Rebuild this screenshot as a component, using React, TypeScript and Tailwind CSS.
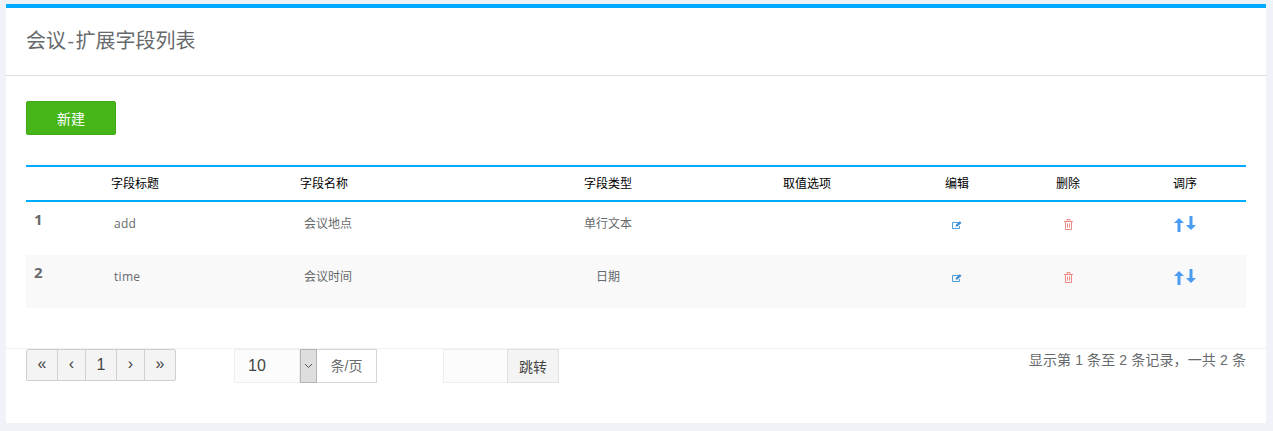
const rows = [
  { n: "1", title: "add", name: "会议地点", type: "单行文本" },
  { n: "2", title: "time", name: "会议时间", type: "日期" },
];

function Arrow({ down = false }: { down?: boolean }) {
  return (
    <svg width="10" height="15" viewBox="0 0 10 15" className={down ? "block -mt-[1px]" : "block"}>
      <path
        d={down ? "M3.5 0H6.5V9H10L5 14L0 9H3.5Z" : "M3.5 15H6.5V6H10L5 1L0 6H3.5Z"}
        fill="#4a9bf2"
      />
    </svg>
  );
}

function EditIcon() {
  return (
    <svg width="10" height="8" viewBox="0 0 10 8" className="block mx-auto">
      <path d="M7 1.5H0.5V7.5H7.5V5" fill="none" stroke="#4a9fdc" strokeWidth="1" />
      <path d="M3.5 5.5L4 3.8L7.8 0.3L9.6 1.8L5.5 5.5Z" fill="#3d8fd6" />
    </svg>
  );
}

function TrashIcon() {
  return (
    <svg width="9" height="11" viewBox="0 0 9 11" className="block mx-auto">
      <path
        d="M0 2.5H9M3 2.5V0.5H6V2.5M1.5 2.5V10.5H7.5V2.5M3.5 4.5V8.5M5.5 4.5V8.5"
        fill="none"
        stroke="#ee8a85"
        strokeWidth="1"
      />
    </svg>
  );
}

const pages = [
  { t: "«", w: "w-[30px]" },
  { t: "‹", w: "w-[28px]" },
  { t: "1", w: "w-[31px]" },
  { t: "›", w: "w-[28px]" },
  { t: "»", w: "w-[31px]" },
];

const th = "h-[37px] border-y-2 border-[#00aaff] font-normal";

export default function App() {
  return (
    <div className="h-[431px] bg-[#eff3f7] pt-[4px] pr-[7px] pl-[6px] font-['Open_Sans','Noto_Sans_CJK_SC',sans-serif] text-[#676a6c] overflow-hidden">
      <div className="h-[419px] bg-white border-t-4 border-[#00aaff]">
        <div className="h-[68px] border-b border-[#e0e0e0] px-[20px] flex items-center">
          <h1 className="text-[20px] leading-none -mt-[1px] text-[#676a6c] font-normal">
            会议<span className="mx-[1.5px]">-</span>扩展字段列表
          </h1>
        </div>
        <div className="px-[20px] pt-[25px]">
          <button className="block w-[90px] h-[34px] pt-[1px] rounded-[2px] bg-[#46b517] border border-[#3fa814] text-white text-[14px]">新建</button>
          <table className="mt-[30px] w-[1220px] table-fixed border-separate border-spacing-0 text-[12px]">
            <colgroup>
              <col className="w-[85px]" />
              <col className="w-[189px]" />
              <col className="w-[204px]" />
              <col className="w-[208px]" />
              <col className="w-[190px]" />
              <col className="w-[110px]" />
              <col className="w-[112px]" />
              <col className="w-[122px]" />
            </colgroup>
            <thead>
              <tr className="text-black">
                <th className={th}></th>
                <th className={`${th} text-left`}>字段标题</th>
                <th className={`${th} text-left`}>字段名称</th>
                <th className={`${th} text-center`}>字段类型</th>
                <th className={`${th} text-center`}>取值选项</th>
                <th className={`${th} text-center`}>编辑</th>
                <th className={`${th} text-center`}>删除</th>
                <th className={`${th} text-center`}>调序</th>
              </tr>
            </thead>
            <tbody>
              {rows.map((r, i) => (
                <tr key={r.n} className={i % 2 === 1 ? "h-[53px] bg-[#f9f9f9]" : "h-[53px]"}>
                  <td className="pl-[8px] pb-[18px] text-[15px] font-bold align-middle">{r.n}</td>
                  <td className="pl-[3px] pb-[9px] align-middle tracking-[0.3px]">{r.title}</td>
                  <td className="pl-[4px] pb-[9px] align-middle">{r.name}</td>
                  <td className="pb-[9px] text-center align-middle">{r.type}</td>
                  <td></td>
                  <td className="pb-[8px] align-middle">
                    <EditIcon />
                  </td>
                  <td className="pb-[8px] align-middle">
                    <TrashIcon />
                  </td>
                  <td className="pb-[8px] align-middle">
                    <div className="flex justify-center gap-[2px]">
                      <Arrow />
                      <Arrow down />
                    </div>
                  </td>
                </tr>
              ))}
            </tbody>
          </table>
        </div>
        <div className="mt-[40px] border-t border-[#f1f1f1] px-[20px] flex items-start">
          <div className="flex h-[32px] border border-[#cfcfcf] rounded-[2px] bg-[#f4f4f4] text-[#444]">
            {pages.map((p, i) => (
              <div
                key={i}
                className={`${p.w} flex items-center justify-center font-['Liberation_Sans',sans-serif] ${i === 2 ? "text-[16px]" : "text-[16px] pb-[2px]"} ${i > 0 ? "border-l border-[#cfcfcf]" : ""}`}
              >
                {p.t}
              </div>
            ))}
          </div>
          <div className="ml-[58px] flex h-[34px] text-[14px] font-['Liberation_Sans','Noto_Sans_CJK_SC',sans-serif]">
            <div className="w-[66px] bg-[#fcfcfc] border border-[#eeeeee] rounded-l-[2px] flex items-center pl-[13px] text-[16px] text-[#444]">10</div>
            <div className="w-[17px] bg-[#dedede] border border-[#b4b4b4] flex items-center justify-center">
              <svg width="9" height="6" viewBox="0 0 9 6"><path d="M1 1L4.5 4.5L8 1" fill="none" stroke="#555" strokeWidth="1" /></svg>
            </div>
            <div className="w-[60px] border border-l-0 border-[#d5d5dd] flex items-center justify-center">条/页</div>
          </div>
          <div className="ml-[66px] flex h-[34px]">
            <div className="w-[64px] bg-[#fcfcfc] border border-r-0 border-[#eeeeee]"></div>
            <div className="w-[52px] bg-[#f4f4f4] border border-[#e0e0e0] flex items-center justify-center text-[14px] text-[#444]">跳转</div>
          </div>
          <div className="ml-auto pt-[1px] text-[14px] leading-[20px] tracking-[0.12px] font-['Liberation_Sans','Noto_Sans_CJK_SC',sans-serif]">显示第 1 条至 2 条记录，一共 2 条</div>
        </div>
      </div>
    </div>
  );
}
